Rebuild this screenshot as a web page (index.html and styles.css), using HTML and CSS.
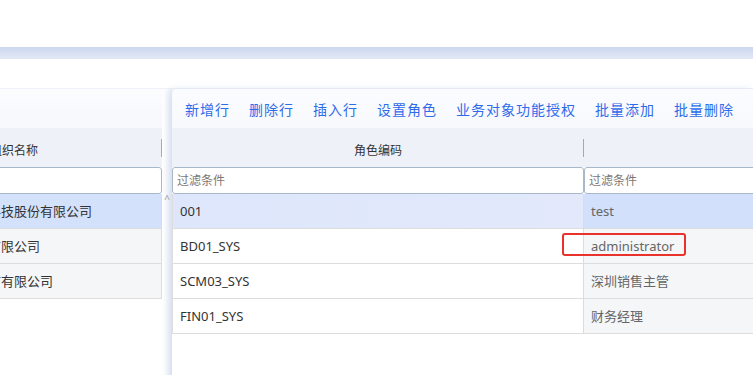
FILE: index.html
```html
<!DOCTYPE html>
<html lang="zh-CN">
<head>
<meta charset="UTF-8">
<meta name="viewport" content="width=device-width, initial-scale=1.0">
<title>角色管理</title>
<link rel="stylesheet" href="styles.css">
</head>
<body>

<div class="top"></div>
<div class="band"></div>
<div class="spacer"></div>

<div class="main">
    <!-- left: organisation list -->
    <div class="left">
        <div class="clip">
            <div class="left-inner">
                <div class="left-top"></div>
                <div class="head-row">
                    <div class="head-cell org">组织名称</div>
                </div>
                <div class="filter-row">
                    <div class="filter"></div>
                </div>
                <div class="row selected"><div class="cell">深圳科技股份有限公司</div></div>
                <div class="row alt"><div class="cell">深圳有限公司</div></div>
                <div class="row alt"><div class="cell">深圳市有限公司</div></div>
            </div>
        </div>
        <div class="scroll"><span class="caret">^</span></div>
    </div>

    <!-- right: role grid -->
    <div class="right">
        <div class="toolbar">
            <a>新增行</a>
            <a>删除行</a>
            <a>插入行</a>
            <a>设置角色</a>
            <a>业务对象功能授权</a>
            <a>批量添加</a>
            <a>批量删除</a>
        </div>
        <div class="grid">
            <div class="head-row">
                <div class="head-cell code">角色编码</div>
                <div class="head-cell name"></div>
            </div>
            <div class="filter-row">
                <div class="filter code"><span>过滤条件</span></div>
                <div class="filter name"><span>过滤条件</span></div>
            </div>
            <div class="row selected">
                <div class="cell code">001</div>
                <div class="cell name">test</div>
            </div>
            <div class="row">
                <div class="cell code">BD01_SYS</div>
                <div class="cell name">administrator</div>
            </div>
            <div class="row">
                <div class="cell code">SCM03_SYS</div>
                <div class="cell name">深圳销售主管</div>
            </div>
            <div class="row">
                <div class="cell code">FIN01_SYS</div>
                <div class="cell name">财务经理</div>
            </div>
            <div class="mark"></div>
        </div>
    </div>
</div>

</body>
</html>
```

FILE: styles.css
```css
body {
    margin: 0;
    background: #fff;
    font-family: "Noto Sans", "Noto Sans CJK SC", sans-serif;
    color: #333;
    overflow: hidden;
}
.top {
    height: 47px;
}
.band {
    height: 12px;
    background: linear-gradient(#ccd6ee, #e2e8f5);
}
.spacer {
    height: 29px;
    border-bottom: 1px solid #eef1f7;
}
.main {
    display: flex;
    height: 300px;
}

/* shared grid parts */
.head-row {
    display: flex;
    height: 39px;
    background: #eef1f8;
}
.head-cell {
    font-size: 12px;
    line-height: 39px;
    padding-top: 3px;
    box-sizing: border-box;
    color: #333;
    flex: 1;
    position: relative;
}
.filter-row {
    display: flex;
    height: 27px;
}
.filter {
    border: 1px solid #a9b8c8;
    border-radius: 3px;
    background: #fff;
    box-sizing: border-box;
    font-size: 12px;
    line-height: 25px;
    color: #7e7672;
    padding-left: 4px;
}
.row {
    display: flex;
    height: 35px;
    border-bottom: 1px solid #dddddd;
    box-sizing: border-box;
}
.cell {
    font-size: 13px;
    line-height: 34px;
    white-space: nowrap;
}

/* left panel */
.left {
    width: 172px;
    display: flex;
    flex-shrink: 0;
}
.clip {
    width: 162px;
    overflow: hidden;
    flex-shrink: 0;
}
.left-inner {
    width: 208px;
    margin-left: -46px;
}
.left-top {
    height: 39px;
    background: linear-gradient(#fbfcfe, #f6f8fc);
}
.scroll {
    width: 10px;
    padding-top: 105px;
    background: linear-gradient(90deg, #fff, #eef2fa);
}
.caret {
    display: block;
    font-size: 10px;
    color: #999;
    text-align: center;
    line-height: 10px;
}
.head-cell.org {
    padding-left: 36px;
}
.head-cell.org::after {
    content: "";
    position: absolute;
    right: 0;
    top: 11px;
    height: 18px;
    border-right: 1px solid #a9a9a9;
}
.left .filter {
    flex: 1;
}
.left .row {
    border-right: 1px solid #dcdcdc;
}
.left .cell {
    padding-left: 8px;
}
.left .row.alt {
    background: #f5f6f8;
}
.left .row.selected {
    background: #d4e1fb;
}

/* right panel */
.right {
    flex: 1;
    background: #fff;
    border-top-left-radius: 6px;
    box-shadow: -3px 0 6px rgba(170, 185, 220, 0.35);
    position: relative;
    min-width: 0;
}
.toolbar {
    height: 39px;
    display: flex;
    align-items: center;
    gap: 19px;
    padding-left: 13px;
    background: linear-gradient(#fbfcff, #f7f9fd);
    border-top-left-radius: 6px;
    white-space: nowrap;
}
.toolbar a {
    color: #2e6bea;
    font-size: 14px;
    letter-spacing: 1px;
    cursor: pointer;
}
.grid {
    position: relative;
    width: 600px;
}
.code {
    width: 412px;
    flex: none;
}
.name {
    width: 188px;
    flex: none;
}
.head-cell.code {
    text-align: center;
}
.head-cell.code::after {
    content: "";
    position: absolute;
    right: 0;
    top: 11px;
    height: 18px;
    border-right: 1px solid #a9a9a9;
}
.grid .row {
    border-left: 1px solid #dddddd;
}
.grid .cell.code {
    width: 411px;
    padding-left: 7px;
    box-sizing: border-box;
    border-right: 1px solid #dcdcdc;
}
.grid .cell.name {
    padding-left: 7px;
    box-sizing: border-box;
    background: #f5f6f8;
    color: #666;
}
.grid .row.selected .cell.code {
    background: linear-gradient(90deg, #dde6fb, #e3e9fb);
}
.grid .row.selected .cell.name {
    background: #d2e0fb;
}
.mark {
    position: absolute;
    left: 390px;
    top: 105px;
    width: 124px;
    height: 23px;
    border: 2px solid #e8322b;
    border-radius: 3px;
    box-sizing: border-box;
}
```
